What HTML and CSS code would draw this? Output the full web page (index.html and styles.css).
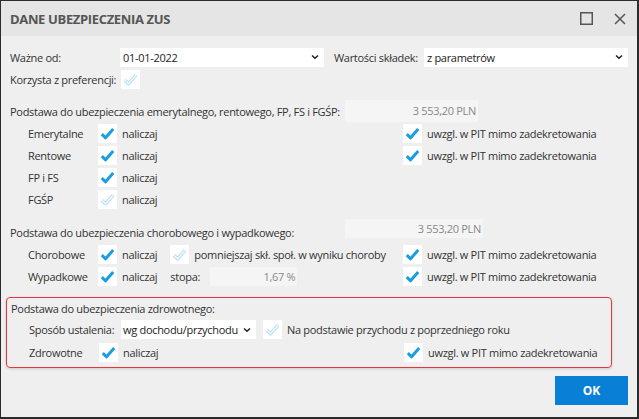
FILE: index.html
```html
<!DOCTYPE html>
<html lang="pl">

<head>
  <meta charset="UTF-8">
  <title>Dane ubezpieczenia ZUS</title>
  <link rel="stylesheet" href="styles.css">
</head>

<body>
  <svg class="defs" width="0" height="0">
    <symbol id="ck" viewBox="0 0 19 19">
      <path d="M3.8 10.2 L7.6 13.8 L15.2 5" fill="none" stroke="#1a9ee0" stroke-width="3" stroke-linejoin="round" />
    </symbol>
    <symbol id="ck-off" viewBox="0 0 19 19">
      <path d="M3.8 10.2 L7.6 13.8 L15.2 5" fill="none" stroke="#b3def3" stroke-width="3.4" stroke-linejoin="round" />
      <path d="M3.8 10.2 L7.6 13.8 L15.2 5" fill="none" stroke="#f4fafd" stroke-width="1.4" stroke-linejoin="round" />
    </symbol>
    <symbol id="chev" viewBox="0 0 8 6">
      <path d="M1 1.5 L4 4.3 L7 1.5" fill="none" stroke="#222" stroke-width="1.5" />
    </symbol>
  </svg>

  <div class="window">
    <div class="titlebar">
      <span class="title">DANE UBEZPIECZENIA ZUS</span>
      <div class="win-btns">
        <svg width="13" height="13" viewBox="0 0 13 13">
          <rect x="0.75" y="0.75" width="11.5" height="11.5" fill="none" stroke="#555" stroke-width="1.5" />
        </svg>
        <svg width="12" height="12" viewBox="0 0 12 12">
          <path d="M1 1 L11 11 M11 1 L1 11" stroke="#555" stroke-width="1.5" />
        </svg>
      </div>
    </div>

    <div class="content">
      <div class="row">
        <span class="lbl-top">Ważne od:</span>
        <div class="select sel-date">01-01-2022<svg class="chev"><use href="#chev" /></svg></div>
        <span class="lbl-wart">Wartości składek:</span>
        <div class="select sel-param">z parametrów<svg class="chev"><use href="#chev" /></svg></div>
      </div>
      <div class="row">
        <span class="lbl-pref">Korzysta z preferencji:</span>
        <svg class="chk"><use href="#ck-off" /></svg>
      </div>

      <div class="section">
        <div class="row">
          <span class="head-lbl">Podstawa do ubezpieczenia emerytalnego, rentowego, FP, FS i FGŚP:</span>
          <span class="value v1">3 553,20 PLN</span>
        </div>
        <div class="opt-row">
          <span class="name">Emerytalne</span>
          <div class="cell"><svg class="chk"><use href="#ck" /></svg><span>naliczaj</span></div>
          <div class="cell"><svg class="chk"><use href="#ck" /></svg><span>uwzgl. w PIT mimo zadekretowania</span></div>
        </div>
        <div class="opt-row">
          <span class="name">Rentowe</span>
          <div class="cell"><svg class="chk"><use href="#ck" /></svg><span>naliczaj</span></div>
          <div class="cell"><svg class="chk"><use href="#ck" /></svg><span>uwzgl. w PIT mimo zadekretowania</span></div>
        </div>
        <div class="opt-row">
          <span class="name">FP i FS</span>
          <div class="cell"><svg class="chk"><use href="#ck" /></svg><span>naliczaj</span></div>
        </div>
        <div class="opt-row">
          <span class="name">FGŚP</span>
          <div class="cell"><svg class="chk"><use href="#ck-off" /></svg><span>naliczaj</span></div>
        </div>
      </div>

      <div class="section s2">
        <div class="row head2">
          <span class="head-lbl">Podstawa do ubezpieczenia chorobowego i wypadkowego:</span>
          <span class="value v2">3 553,20 PLN</span>
        </div>
        <div class="opt-row">
          <span class="name">Chorobowe</span>
          <div class="cell">
            <svg class="chk"><use href="#ck" /></svg><span class="nal">naliczaj</span>
            <svg class="chk"><use href="#ck-off" /></svg><span>pomniejszaj skł. społ. w wyniku choroby</span>
          </div>
          <div class="cell"><svg class="chk"><use href="#ck" /></svg><span>uwzgl. w PIT mimo zadekretowania</span></div>
        </div>
        <div class="opt-row">
          <span class="name">Wypadkowe</span>
          <div class="cell">
            <svg class="chk"><use href="#ck" /></svg><span class="nal">naliczaj</span>
            <span class="stopa">stopa:</span><span class="value v3">1,67 %</span>
          </div>
          <div class="cell"><svg class="chk"><use href="#ck" /></svg><span>uwzgl. w PIT mimo zadekretowania</span></div>
        </div>
      </div>

      <div class="health">
        <div class="row">
          <span>Podstawa do ubezpieczenia zdrowotnego:</span>
        </div>
        <div class="row indent">
          <span class="lbl-sposob">Sposób ustalenia:</span>
          <div class="select sel-sposob">wg dochodu/przychodu<svg class="chev"><use href="#chev" /></svg></div>
          <svg class="chk"><use href="#ck-off" /></svg><span>Na podstawie przychodu z poprzedniego roku</span>
        </div>
        <div class="opt-row">
          <span class="name">Zdrowotne</span>
          <div class="cell"><svg class="chk"><use href="#ck" /></svg><span>naliczaj</span></div>
          <div class="cell"><svg class="chk"><use href="#ck" /></svg><span>uwzgl. w PIT mimo zadekretowania</span></div>
        </div>
      </div>

      <div class="actions">
        <button class="ok">OK</button>
      </div>
    </div>
  </div>
</body>

</html>
```

FILE: styles.css
```css
html,
body {
  margin: 0;
  padding: 0;
  height: 100%;
}

body {
  font-family: "Open Sans", "Noto Sans", sans-serif;
  font-size: 11px;
  letter-spacing: -0.3px;
  white-space: nowrap;
  color: #333;
  background-color: #eeeeee;
}

.defs {
  position: absolute;
  width: 0;
  height: 0;
}

.window {
  box-sizing: border-box;
  height: 419px;
  border: 1px solid #2b2b2b;
  border-right-width: 2px;
  border-bottom-width: 2px;
  background-color: #efefef;
}

.titlebar {
  height: 35px;
  display: flex;
  align-items: center;
  justify-content: space-between;
  padding: 0 11px 0 9px;
  background-color: #e5e5e5;
}

.title {
  font-size: 13px;
  font-weight: 700;
  letter-spacing: -0.35px;
  color: #555;
}

.win-btns {
  display: flex;
  align-items: center;
  gap: 21px;
}

.content {
  padding: 10px 9px 0 9px;
}

.row {
  display: flex;
  align-items: center;
  height: 22px;
}

.row > span {
  flex: none;
}

.select {
  box-sizing: border-box;
  height: 19px;
  flex: none;
  display: flex;
  align-items: center;
  justify-content: space-between;
  padding: 0 5px 0 3px;
  background-color: #fff;
  color: #222;
}

.chev {
  width: 8px;
  height: 6px;
}

.lbl-top {
  width: 110px;
}

.sel-date {
  width: 204px;
}

.lbl-wart {
  width: 90px;
  margin-left: 10px;
}

.sel-param {
  width: 204px;
}

.lbl-pref {
  width: 111px;
}

.chk {
  width: 19px;
  height: 19px;
  flex: none;
  background-color: #fff;
}

.section {
  margin-top: 10px;
}

.head-lbl {
  width: 335px;
}

.value {
  box-sizing: border-box;
  height: 22px;
  line-height: 22px;
  text-align: right;
  padding-right: 2px;
  background-color: #f5f5f5;
  color: #888;
}

.v1 {
  width: 133px;
}

.head2 {
  height: 23px;
}

.head2 .head-lbl {
  padding-top: 2px;
}

.v2 {
  width: 138px;
  height: 19px;
  line-height: 19px;
  align-self: flex-start;
  margin-top: -1px;
}

.v3 {
  width: 87px;
  height: 19px;
  line-height: 19px;
}

.opt-row {
  display: grid;
  grid-template-columns: 70px 305px auto;
  align-items: center;
  height: 22px;
  padding-left: 18px;
}

.cell {
  display: flex;
  align-items: center;
  gap: 5px;
}

.nal {
  margin-right: 8px;
}

.stopa {
  width: 35px;
}

.health {
  margin: 10px 0 0 -4px;
  width: 606px;
  box-sizing: border-box;
  height: 71px;
  padding: 0 0 0 4px;
  border: 1px solid #e8343a;
  border-radius: 4px;
  box-shadow: 0 1px 3px rgba(0, 0, 0, 0.15);
}

.health .row {
  height: 21px;
}

.indent {
  padding-left: 18px;
}

.lbl-sposob {
  width: 92px;
}

.sel-sposob {
  width: 135px;
  margin-right: 7px;
  padding-left: 2px;
}

.sel-sposob + .chk {
  margin-right: 5px;
}

.health .opt-row {
  height: 25px;
}

.actions {
  display: flex;
  justify-content: flex-end;
  margin-top: 8px;
}

.ok {
  width: 73px;
  height: 29px;
  border: none;
  background-color: #0a7fd6;
  color: #fff;
  font-family: "Open Sans", sans-serif;
  font-size: 12px;
  font-weight: 700;
}
```
